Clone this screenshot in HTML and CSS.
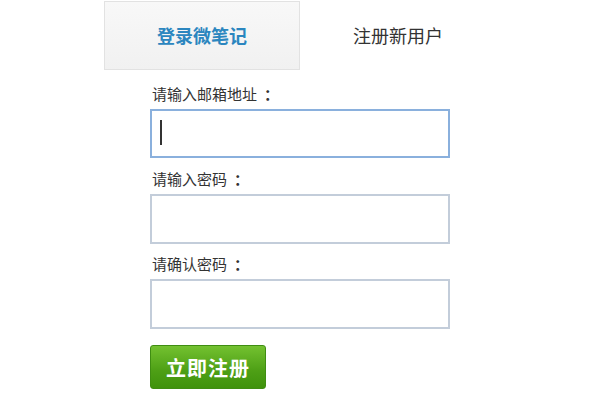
FILE: index.html
```html
<!DOCTYPE html>
<html lang="zh-CN">
<head>
<meta charset="utf-8">
<title>注册新用户</title>
<link rel="stylesheet" href="styles.css">
</head>
<body>
<div class="page">
  <div class="tabs">
    <div class="tab tab-login">登录微笔记</div>
    <div class="tab tab-register">注册新用户</div>
  </div>
  <form class="form">
    <label class="label">请输入邮箱地址<span class="colon">：</span></label>
    <div class="field">
      <input class="input input-focus" type="text">
      <span class="caret"></span>
    </div>
    <label class="label">请输入密码<span class="colon">：</span></label>
    <div class="field">
      <input class="input" type="password">
    </div>
    <label class="label">请确认密码<span class="colon">：</span></label>
    <div class="field">
      <input class="input" type="password">
    </div>
    <button class="btn" type="button">立即注册</button>
  </form>
</div>
</body>
</html>
```
FILE: styles.css
```css
* { box-sizing: border-box; }
html, body { margin: 0; padding: 0; background: #fff; }
body {
  font-family: "Microsoft YaHei", "Noto Sans CJK SC", "Liberation Sans", sans-serif;
  color: #333;
}
.page { padding-left: 104px; width: 600px; height: 400px; overflow: hidden; }
.tabs { display: flex; margin-top: 1px; }
.tab {
  width: 196px;
  height: 69px;
  display: flex;
  align-items: center;
  justify-content: center;
  font-size: 18px;
  padding-bottom: 1px;
}
.tab-login {
  border: 1px solid #e2e2e2;
  background: linear-gradient(#f8f8f8, #f1f1f1);
  color: #2b86bf;
  font-weight: bold;
}
.tab-register {
  color: #333;
  font-weight: normal;
}
.form { padding-left: 46px; margin-top: 4px; display: flex; flex-direction: column; align-items: flex-start; }
.label {
  display: block;
  height: 35px;
  padding-top: 4px;
  line-height: 31px;
  font-size: 15px;
  color: #333;
  padding-left: 2px;
}
.colon {
  font-weight: bold;
  margin-left: 7px;
}
.field { position: relative; width: 300px; height: 50px; }
.input {
  display: block;
  width: 300px;
  height: 50px;
  border: 2px solid #c3cdda;
  background: #fff;
  outline: none;
  margin: 0;
}
.input-focus { border-color: #8ab0dd; height: 49px; }
.caret {
  position: absolute;
  left: 10px;
  top: 11px;
  width: 2px;
  height: 25px;
  background: #333;
}
.btn {
  margin-top: 16px;
  width: 116px;
  height: 44px;
  border: 1px solid #3f8d12;
  border-radius: 3px;
  background: linear-gradient(#73c130, #4d9f15 60%, #3f920c);
  color: #fff;
  font-family: inherit;
  font-size: 20px;
  font-weight: bold;
  letter-spacing: 1px;
  cursor: pointer;
  padding: 0;
}
```
